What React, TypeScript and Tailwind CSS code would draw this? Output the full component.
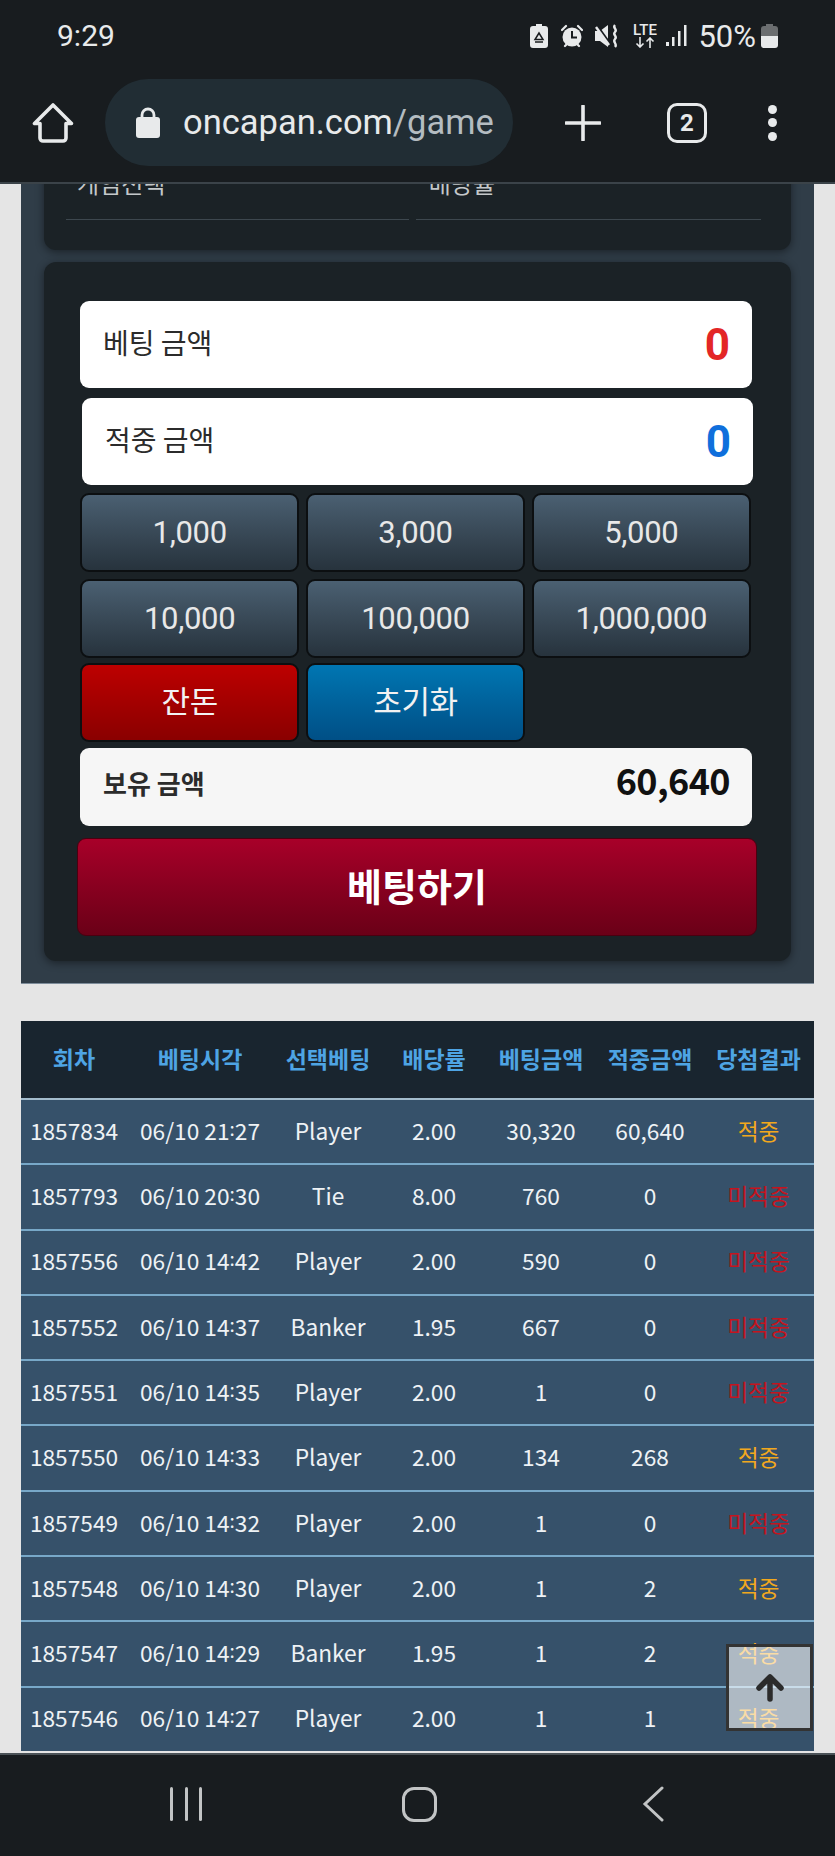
const AMOUNTS = ['1,000', '3,000', '5,000', '10,000', '100,000', '1,000,000'];

type Row = [string, string, string, string, string, string, boolean];

const ROWS: Row[] = [
  ['1857834', '06/10 21:27', 'Player', '2.00', '30,320', '60,640', true],
  ['1857793', '06/10 20:30', 'Tie', '8.00', '760', '0', false],
  ['1857556', '06/10 14:42', 'Player', '2.00', '590', '0', false],
  ['1857552', '06/10 14:37', 'Banker', '1.95', '667', '0', false],
  ['1857551', '06/10 14:35', 'Player', '2.00', '1', '0', false],
  ['1857550', '06/10 14:33', 'Player', '2.00', '134', '268', true],
  ['1857549', '06/10 14:32', 'Player', '2.00', '1', '0', false],
  ['1857548', '06/10 14:30', 'Player', '2.00', '1', '2', true],
  ['1857547', '06/10 14:29', 'Banker', '1.95', '1', '2', true],
  ['1857546', '06/10 14:27', 'Player', '2.00', '1', '1', true],
];

const HEADERS = ['회차', '베팅시각', '선택베팅', '배당률', '베팅금액', '적중금액', '당첨결과'];

const COLS = 'grid grid-cols-[106px_146px_110px_102px_112px_106px_111px] items-center text-center';

function StatusIcons() {
  return (
    <div className="flex items-center text-[#e8eaeb]">
      {/* battery saver */}
      <svg width="18" height="24" viewBox="0 0 18 24" className="mr-[13px]">
        <path d="M6 0h6v2h3a3 3 0 0 1 3 3v16a3 3 0 0 1-3 3H3a3 3 0 0 1-3-3V5a3 3 0 0 1 3-3h3z" fill="#e8eaeb" />
        <path d="M9 9l-4 6.500h8zM5 18h8" fill="none" stroke="#181c1f" strokeWidth="1.500" />
      </svg>
      {/* alarm */}
      <svg width="22" height="24" viewBox="0 0 22 24" className="mr-[12px]">
        <circle cx="11" cy="13" r="9.500" fill="#e8eaeb" />
        <path d="M11 7v6.500h5" fill="none" stroke="#181c1f" strokeWidth="2" />
        <path d="M1 6l4-4M21 6l-4-4M4 22l2-2M18 22l-2-2" stroke="#e8eaeb" strokeWidth="2.200" strokeLinecap="round" />
      </svg>
      {/* muted with vibrate */}
      <svg width="25" height="24" viewBox="0 0 25 24" className="mr-[11px]">
        <path d="M0 7h5l8-6v22l-8-6H0z" fill="#e8eaeb" />
        <path d="M1 1l15 21" stroke="#181c1f" strokeWidth="3.500" />
        <path d="M1 3l13 18" stroke="#e8eaeb" strokeWidth="2.400" />
        <path d="M20 1c-3 3 3 4 0 7s3 4 0 7 3 5 0 8" fill="none" stroke="#e8eaeb" strokeWidth="2.400" />
      </svg>
      <div className="mr-[8px] flex w-[27px] flex-col items-center font-['Roboto',sans-serif] text-[15px] leading-[13px] font-medium">
        <span>LTE</span>
        <svg width="20" height="11" viewBox="0 0 20 11">
          <path d="M5 0v10M1.500 6.500L5 10l3.500-3.500M15 11V1M11.500 4.500L15 1l3.500 3.500" fill="none" stroke="#e8eaeb" strokeWidth="1.600" />
        </svg>
      </div>
      <svg width="22" height="24" viewBox="0 0 22 24" className="mr-[10px]">
        <rect x="0" y="18" width="3" height="4" fill="#e8eaeb" />
        <rect x="6" y="13" width="2.500" height="9" fill="#e8eaeb" />
        <rect x="12" y="7" width="2.500" height="15" fill="#e8eaeb" />
        <rect x="18" y="1" width="2.500" height="21" fill="#e8eaeb" />
      </svg>
      <span className="mr-[5px] font-['Roboto',sans-serif] text-[31px] leading-none">50%</span>
      <svg width="17" height="24" viewBox="0 0 17 24">
        <path d="M5 0h7v2h2a3 3 0 0 1 3 3v7H0V5a3 3 0 0 1 3-3h2z" fill="#6b6e70" />
        <path d="M0 12h17v9a3 3 0 0 1-3 3H3a3 3 0 0 1-3-3z" fill="#e8eaeb" />
      </svg>
    </div>
  );
}

function BrowserBar() {
  return (
    <div className="flex h-[114px] items-center border-b-2 border-[#3b4349] pb-[7px]">
      <svg width="42" height="42" viewBox="0 0 42 42" className="ml-[32px] shrink-0">
        <path
          d="M21 3L2.500 21.500H8V36a3 3 0 0 0 3 3h20a3 3 0 0 0 3-3V21.500h5.500z"
          fill="none"
          stroke="#e8eaeb"
          strokeWidth="3.600"
          strokeLinejoin="round"
        />
      </svg>
      <div className="ml-[31px] flex h-[87px] w-[408px] shrink-0 items-center rounded-full bg-[#212d34] pl-[31px]">
        <svg width="24" height="31" viewBox="0 0 24 31" className="shrink-0">
          <path d="M6 12V8a6 6 0 0 1 12 0v4" fill="none" stroke="#e8eaeb" strokeWidth="2.800" />
          <rect x="0" y="10" width="24" height="21" rx="3" fill="#e8eaeb" />
        </svg>
        <span className="ml-[23px] font-['Roboto',sans-serif] text-[34.500px] leading-none whitespace-nowrap text-[#e8eaeb]">
          oncapan.com<span className="text-[#b4bcc1]">/game</span>
        </span>
      </div>
      <svg width="36" height="36" viewBox="0 0 36 36" className="ml-[52px] shrink-0">
        <path d="M18 1v34M1 18h34" stroke="#e8eaeb" strokeWidth="3.600" strokeLinecap="round" />
      </svg>
      <div className="ml-[66px] flex h-[40px] w-[40px] shrink-0 items-center justify-center rounded-[10px] border-[3.500px] border-[#e8eaeb] font-['Roboto',sans-serif] text-[24px] leading-none font-bold text-[#e8eaeb]">
        2
      </div>
      <div className="ml-[61px] flex shrink-0 flex-col gap-[4.500px]">
        <div className="h-[9px] w-[9px] rounded-full bg-[#e8eaeb]" />
        <div className="h-[9px] w-[9px] rounded-full bg-[#e8eaeb]" />
        <div className="h-[9px] w-[9px] rounded-full bg-[#e8eaeb]" />
      </div>
    </div>
  );
}

function AmountBox({ label, color, className }: { label: string; color: string; className: string }) {
  return (
    <div className={`flex h-[87px] items-center justify-between rounded-[9px] bg-white pr-[22px] pl-[23px] ${className}`}>
      <span className="pb-[6px] text-[28px] leading-none text-[#2b2b2b]">{label}</span>
      <span className={`font-['Roboto',sans-serif] text-[44px] leading-none font-bold ${color}`}>0</span>
    </div>
  );
}

function ChipButton({ label, className }: { label: string; className: string }) {
  return (
    <button
      className={`flex h-[79px] items-center justify-center rounded-[9px] border-2 border-[#0c0f11] bg-linear-to-b pb-[1px] font-['Roboto','Noto_Sans_CJK_KR',sans-serif] text-[31px] leading-none tracking-[-0.3px] ${className}`}
    >
      {label}
    </button>
  );
}

// the colon sits high in the reference's table font
function TimeCell({ value }: { value: string }) {
  const [left, right] = value.split(':');
  return (
    <span className="whitespace-nowrap">
      {left}
      <span className="align-[4px] text-[19px] leading-[0]">:</span>
      {right}
    </span>
  );
}

export default function App() {
  return (
    <div className="relative flex h-[1856px] w-[835px] flex-col overflow-hidden bg-[#e5e5e5] font-['Noto_Sans_CJK_KR',sans-serif]">
      <header className="shrink-0 bg-[#181c1f]">
        <div className="flex h-[70px] items-center justify-between pt-[2px] pr-[57px] pl-[57px]">
          <span className="font-['Roboto',sans-serif] text-[30px] leading-none text-[#e8eaeb]">9:29</span>
          <StatusIcons />
        </div>
        <BrowserBar />
      </header>

      <main className="min-h-0 flex-1 overflow-hidden">
        <section className="mx-[21px] border-b border-[#7d8c9a] bg-[#303d48] px-[23px] pb-[22px]">
          <div className="-mt-[41px] flex gap-[6.500px] rounded-[12px] bg-[#1b2226] pr-[30px] pb-[30px] pl-[22px] shadow-[0_2px_8px_rgba(0,0,0,0.45)]">
            <div className="flex-1 border-b border-[#3d474e] pt-[28px] pb-[24px] pl-[11px] text-[24px] leading-[24px] text-[#c4c8ca]">
              게임선택
            </div>
            <div className="flex-1 border-b border-[#3d474e] pt-[28px] pb-[24px] pl-[13px] text-[24px] leading-[24px] text-[#c4c8ca]">
              배당률
            </div>
          </div>

          <div className="mt-[12px] flex flex-col rounded-[12px] bg-[#1b2226] pt-[39px] pr-[39px] pb-[25px] pl-[36px] shadow-[0_2px_8px_rgba(0,0,0,0.45)]">
            <AmountBox label="베팅 금액" color="text-[#e32626]" className="" />
            <AmountBox label="적중 금액" color="text-[#0f6fdc]" className="mt-[10px] ml-[2px] -mr-[1px]" />
            <div className="mt-[8px] mr-[1px] grid grid-cols-3 gap-x-[6.500px] gap-y-[7px]">
              {AMOUNTS.map((amount) => (
                <ChipButton key={amount} label={amount} className="from-[#4b6072] to-[#27333d] text-[#e8e8e8]" />
              ))}
              <ChipButton label="잔돈" className="mt-[-2px] from-[#bd0000] to-[#8a0000] text-[#f2f2f2]" />
              <ChipButton label="초기화" className="mt-[-2px] from-[#0076b2] to-[#004f86] text-[#f2f2f2]" />
            </div>
            <div className="mt-[6px] flex h-[78px] items-center justify-between rounded-[9px] bg-[#f6f6f6] pr-[22px] pl-[23px]">
              <span className="pb-[9px] text-[26px] leading-none font-bold text-[#2b2b2b]">보유 금액</span>
              <span className="pb-[17px] text-[36px] leading-none font-bold tracking-[-0.6px] text-[#111]">60,640</span>
            </div>
            <button className="mt-[12px] -ml-[3px] h-[98px] w-[680px] rounded-[9px] border border-[#4a0010] bg-linear-to-b from-[#a80029] to-[#6a0017] pb-[5px] text-[38px] leading-none font-bold text-white">
              베팅하기
            </button>
          </div>
        </section>

        <section className="mx-[21px] mt-[37px] bg-[#34506a]">
          <div className={`${COLS} h-[77px] bg-[#19252f] pb-[2px] text-[23px] leading-none font-bold text-[#4ea4e4]`}>
            {HEADERS.map((h) => (
              <span key={h}>{h}</span>
            ))}
          </div>
          {ROWS.map((row, i) => (
            <div
              key={row[0]}
              className={`${COLS} h-[65.300px] border-t-2 bg-[#36516a] pb-[1px] text-[22.700px] leading-none text-[#eef2f5] ${
                i === 0 ? 'border-[#a3bccd]' : 'border-[#78a8c8]'
              }`}
            >
              <span>{row[0]}</span>
              <TimeCell value={row[1]} />
              <span>{row[2]}</span>
              <span>{row[3]}</span>
              <span>{row[4]}</span>
              <span>{row[5]}</span>
              {row[6] ? (
                <span className="text-[#f2a81d]">적중</span>
              ) : (
                <span className="text-[#c4141e]">미적중</span>
              )}
            </div>
          ))}
        </section>
      </main>

      <nav className="flex h-[103px] shrink-0 items-center border-t-2 border-[#4b5257] bg-[#181c1f] pb-[3px]">
        <div className="ml-[170px] flex gap-[11.500px]">
          <div className="h-[34px] w-[3px] rounded-full bg-[#c2c4c5]" />
          <div className="h-[34px] w-[3px] rounded-full bg-[#c2c4c5]" />
          <div className="h-[34px] w-[3px] rounded-full bg-[#c2c4c5]" />
        </div>
        <div className="ml-[200px] h-[35px] w-[35px] rounded-[12px] border-[3px] border-[#c2c4c5]" />
        <svg width="22" height="36" viewBox="0 0 22 36" className="ml-[205px]">
          <path d="M20 2L3 18l17 16" fill="none" stroke="#c2c4c5" strokeWidth="3" strokeLinecap="round" />
        </svg>
      </nav>

      {/* scroll to top, floats over the table */}
      <button className="absolute right-[22px] bottom-[125px] flex h-[87px] w-[87px] items-center justify-center border-[3px] border-[#333] bg-white/60">
        <svg width="30" height="28" viewBox="0 0 30 28">
          <path d="M15 25V4M4 14L15 3l11 11" fill="none" stroke="#2b2b2b" strokeWidth="5.500" strokeLinecap="round" strokeLinejoin="round" />
        </svg>
      </button>
    </div>
  );
}
